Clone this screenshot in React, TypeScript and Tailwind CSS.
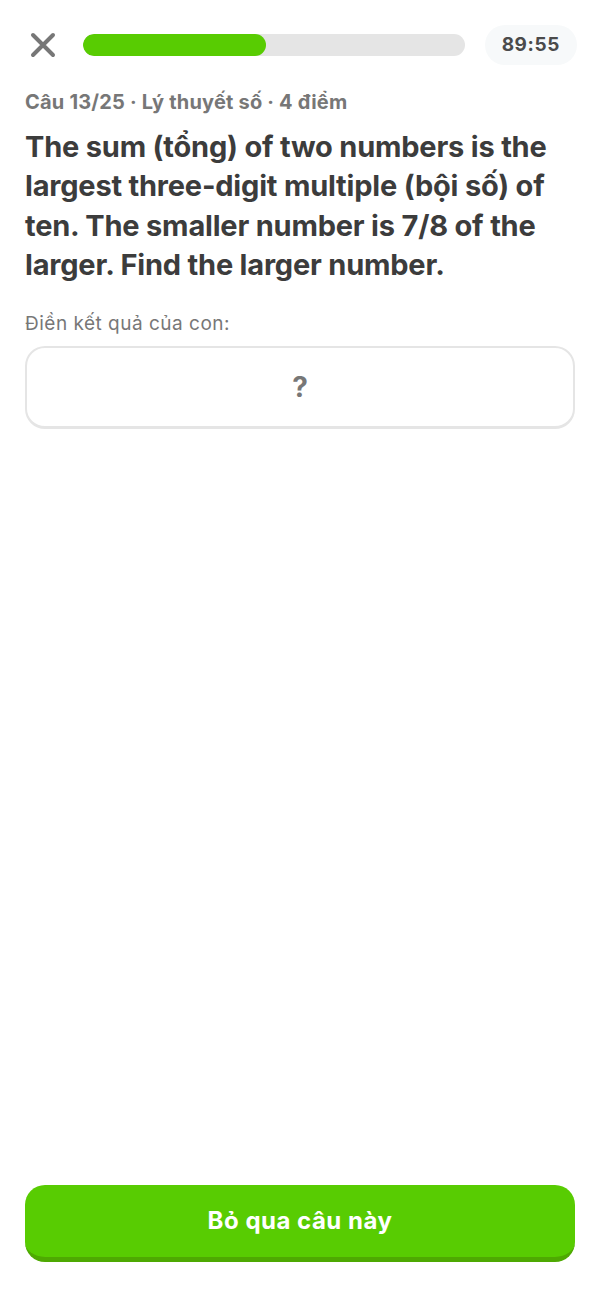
import React from 'react'

export default function App() {
  const progress = 48

  return (
    <div className="min-h-[1299px] w-full bg-white flex flex-col font-['Inter',sans-serif] text-[#3c3c3c]">
      {/* Header */}
      <div className="flex items-center pl-[29px] pr-[23px] pt-[25px] h-[65px] gap-[26px]">
        <button className="w-[28px] h-[28px] flex items-center justify-center shrink-0">
          <svg width="28" height="28" viewBox="0 0 28 28">
            <path d="M4 4 L24 24 M24 4 L4 24" stroke="#777777" strokeWidth="4" strokeLinecap="round" />
          </svg>
        </button>
        <div className="flex-1 h-[22px] rounded-full bg-[#e5e5e5] overflow-hidden">
          <div className="h-full rounded-full bg-[#58cc02]" style={{ width: `${progress}%` }} />
        </div>
        <div className="shrink-0 ml-[-6px] px-[17px] h-[40px] rounded-full bg-[#f7f9fa] flex items-center text-[19px] font-bold text-[#4b4b4b] tracking-[0.6px]">
          89:55
        </div>
      </div>

      <main className="flex-1 flex flex-col px-[25px]">
        <p className="mt-[25px] text-[20px] font-bold text-[#777777] leading-[24px] tracking-[0.2px]">
          Câu 13/25 · Lý thuyết số · 4 điểm
        </p>
        <h1 className="mt-[13px] text-[29px] font-bold leading-[39.3px] text-[#3c3c3c] tracking-[-0.2px]">
          The sum (tổng) of two numbers is the largest three-digit multiple (bội số) of ten. The smaller number is 7/8 of the larger. Find the larger number.
        </h1>
        <p className="mt-[28px] text-[19px] text-[#777777] leading-[24px] tracking-[0.5px]">Điền kết quả của con:</p>
        <div className="mt-[10px] h-[83px] rounded-[20px] border-2 border-b-[3px] border-[#e5e5e5] flex items-center justify-center">
          <span className="text-[28px] leading-none font-bold text-[#777777]">?</span>
        </div>
      </main>

      <div className="px-[25px] pb-[37px]">
        <button className="w-full h-[77px] rounded-[20px] bg-[#58cc02] border-b-[5px] border-[#4ea902] text-white text-[24px] font-bold tracking-[0.5px] flex items-center justify-center">
          Bỏ qua câu này
        </button>
      </div>
    </div>
  )
}
